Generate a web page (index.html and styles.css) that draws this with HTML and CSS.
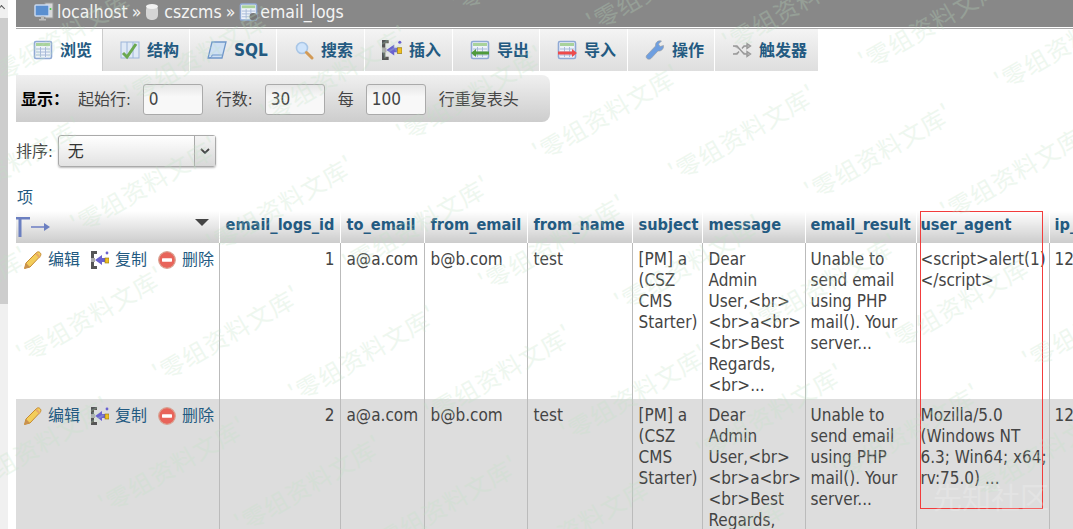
FILE: index.html
```html
<!DOCTYPE html>
<html lang="zh">
<head>
<meta charset="utf-8">
<title>email_logs</title>
<link rel="stylesheet" href="styles.css">
</head>
<body>
<svg class="defs" aria-hidden="true">
  <symbol id="i-table" viewBox="0 0 20 20">
    <rect x="1.500" y="1.500" width="17" height="17" rx="1.500" fill="#eef3fa" stroke="#8fa9d4" stroke-width="1.600"/>
    <rect x="3" y="3" width="14" height="3" fill="#a9d29b"/>
    <path d="M3 9h14M3 12h14M3 15h14M7.500 7v10M12.500 7v10" stroke="#a8bad8" stroke-width="1"/>
  </symbol>
  <symbol id="i-pencil" viewBox="0 0 18 18">
    <path d="M.5 17.500l1.500-5.500L12.500 1.500c1.500-1.200 3-.6 3.800.4.8 1 .8 2.300-.2 3.400L6 16z" fill="#f3cd5a" stroke="#c58a32" stroke-width="1"/>
    <path d="M12 2.500l4 4" stroke="#e6a96a" stroke-width="2"/>
    <path d="M.5 17.500l1.500-5.500 4 4z" fill="#c9914f"/>
  </symbol>
  <symbol id="i-insert" viewBox="0 0 18 18">
    <path d="M0 0h6v3H3v4H0zM0 11h3v4h3v3H0z" fill="#555"/>
    <rect x="0" y="7" width="4" height="4" fill="#aaa"/>
    <path d="M11 4v3h3v4h-3v3L4 9z" fill="#6a62d0"/>
    <rect x="14" y="7" width="4" height="5" fill="#f0c020" stroke="#8a7010" stroke-width=".6"/>
    <circle cx="16" cy="2" r="1.400" fill="#6a62d0"/>
  </symbol>
  <symbol id="i-del" viewBox="0 0 18 18">
    <circle cx="9" cy="9" r="8.300" fill="#e8645a" stroke="#d9a090" stroke-width="1.200"/>
    <rect x="4" y="7.300" width="10" height="3.400" rx=".6" fill="#fff"/>
  </symbol>
</svg>
<div class="page">
  <aside class="gutter">
    <div class="gutter-top"><span class="gutter-arrow"></span></div>
    <div class="gutter-thumb"></div>
  </aside>
  <main class="main">
    <header class="crumbs">
      <svg class="crumb-icon" viewBox="0 0 20 20"><rect x="11" y="1" width="8" height="15" fill="#d8d8d8" stroke="#999"/><rect x="1" y="3" width="14" height="11" rx="1" fill="#5a8fd0" stroke="#c8d8ee" stroke-width="1.500"/><path d="M5 17h7v1.500H5zM7 14h3v3H7z" fill="#bbb"/><circle cx="16.500" cy="7" r="1" fill="#4c4"/></svg>
      <span class="crumb">localhost</span><span class="crumb-sep">»</span>
      <svg class="crumb-icon small" viewBox="0 0 14 20"><rect x="1" y="3" width="12" height="15" rx="5" fill="#d5d5d5"/><ellipse cx="7" cy="4.500" rx="6" ry="2.500" fill="#f2f2f2"/></svg>
      <span class="crumb">cszcms</span><span class="crumb-sep">»</span>
      <svg class="crumb-icon table" viewBox="0 0 20 20"><use href="#i-table"/><circle cx="15" cy="15" r="4" fill="#777"/></svg>
      <span class="crumb">email_logs</span>
    </header>
    <nav class="tabs">
      <a class="tab active w87"><svg class="tab-icon"><use href="#i-table"/></svg><span>浏览</span></a>
      <a class="tab w87"><svg class="tab-icon" viewBox="0 0 20 20"><rect x="1" y="2" width="18" height="16" fill="#dfe9f6" stroke="#9db5da"/><path d="M7 2v16M13 2v16" stroke="#9db5da"/><path d="M3 13l4 4 9-13" fill="none" stroke="#6aa84f" stroke-width="3"/></svg><span>结构</span></a>
      <a class="tab w87"><svg class="tab-icon" viewBox="0 0 20 20"><path d="M5 2h14l-4 16H1z" fill="#cfe0f4" stroke="#6f97c9" stroke-width="1.300"/><path d="M1 18c3 0 4-1 4-3h10" fill="none" stroke="#6f97c9"/></svg><span class="sql">SQL</span></a>
      <a class="tab w88"><svg class="tab-icon" viewBox="0 0 20 20"><circle cx="8" cy="8" r="5.500" fill="#cfe4fb" stroke="#a9c6e6" stroke-width="1.600"/><path d="M12.500 12.500l5.500 5.500" stroke="#d39a55" stroke-width="3" stroke-linecap="round"/></svg><span>搜索</span></a>
      <a class="tab w88"><svg class="tab-icon"><use href="#i-insert"/></svg><span>插入</span></a>
      <a class="tab w87"><svg class="tab-icon" viewBox="0 0 20 20"><use href="#i-table"/><path d="M1 13l5-4v2.500h13v3H6V17z" fill="#4f9a3c"/></svg><span>导出</span></a>
      <a class="tab w88"><svg class="tab-icon" viewBox="0 0 20 20"><use href="#i-table"/><path d="M1 11.500h14V9l5 4-5 4v-2.500H1z" fill="#ee4b4b"/></svg><span>导入</span></a>
      <a class="tab w87"><svg class="tab-icon" viewBox="0 0 20 20"><path d="M1.500 15.500L10.500 6c-.5-3.500 2.500-6 6-5L13.500 4l1.500 2.500 3.500-1c.5 3.500-2.500 6-5.500 5.500L6 18.500c-2.500 2-6-.5-4.500-3z" fill="#6f9fe0" stroke="#9a9a9a" stroke-width=".6"/></svg><span>操作</span></a>
      <a class="tab w104"><svg class="tab-icon" viewBox="0 0 20 20"><path d="M1 6h4l7 8h3M1 14h4l2-2.500M10 8.500L12 6h3M15 3.500L18.500 6 15 8.500zM15 11.500l3.500 2.500-3.500 2.500z" fill="#bbb" stroke="#999" stroke-width="1.400"/></svg><span>触发器</span></a>
    </nav>
    <form class="options">
      <strong class="opt-title">显示：</strong>
      <label class="opt-label">起始行:</label>
      <span class="opt-input">0</span>
      <label class="opt-label">行数:</label>
      <span class="opt-input">30</span>
      <label class="opt-label">每</label>
      <span class="opt-input">100</span>
      <label class="opt-label">行重复表头</label>
    </form>
    <div class="sort">
      <label>排序:</label>
      <div class="select"><span class="select-value">无</span><span class="select-btn"><svg viewBox="0 0 10 6" class="chev"><path d="M1 1l4 4 4-4" fill="none" stroke="#444" stroke-width="1.800"/></svg></span></div>
    </div>
    <div class="item-link">项</div>
    <div class="table-wrap">
      <table class="data">
        <colgroup>
          <col class="c0"><col class="c1"><col class="c2"><col class="c3"><col class="c4"><col class="c5"><col class="c6"><col class="c7"><col class="c8"><col class="c9">
        </colgroup>
        <thead>
          <tr>
            <th class="th-first">
              <div class="th-first-row">
                <svg class="t-arrow" viewBox="0 0 34 20"><path d="M0 0h14v2.500H5.500V20H2.500V2.500H0z" fill="#6b7fc0"/><path d="M15 10h14" stroke="#8a97cc" stroke-width="2"/><path d="M28 6l6 4-6 4z" fill="#6b7fc0"/></svg>
                <span class="th-tri"></span>
              </div>
            </th>
            <th>email_logs_id</th><th>to_email</th><th>from_email</th><th>from_name</th><th>subject</th><th>message</th><th>email_result</th><th>user_agent</th><th>ip_address</th>
          </tr>
        </thead>
        <tbody>
          <tr>
            <td class="actions"><div class="action-row">
              <a class="act"><svg class="act-icon"><use href="#i-pencil"/></svg>编辑</a>
              <a class="act"><svg class="act-icon"><use href="#i-insert"/></svg>复制</a>
              <a class="act"><svg class="act-icon"><use href="#i-del"/></svg>删除</a>
            </div></td>
            <td class="num">1</td><td>a@a.com</td><td>b@b.com</td><td>test</td>
            <td>[PM] a<br>(CSZ<br>CMS<br>Starter)</td>
            <td>Dear<br>Admin<br>User,&lt;br&gt;<br>&lt;br&gt;a&lt;br&gt;<br>&lt;br&gt;Best<br>Regards,<br>&lt;br&gt;...</td>
            <td>Unable to<br>send email<br>using PHP<br>mail(). Your<br>server...</td>
            <td>&lt;script&gt;alert(1)<br>&lt;/script&gt;</td>
            <td>127.0.0.1</td>
          </tr>
          <tr class="alt">
            <td class="actions"><div class="action-row">
              <a class="act"><svg class="act-icon"><use href="#i-pencil"/></svg>编辑</a>
              <a class="act"><svg class="act-icon"><use href="#i-insert"/></svg>复制</a>
              <a class="act"><svg class="act-icon"><use href="#i-del"/></svg>删除</a>
            </div></td>
            <td class="num">2</td><td>a@a.com</td><td>b@b.com</td><td>test</td>
            <td>[PM] a<br>(CSZ<br>CMS<br>Starter)</td>
            <td>Dear<br>Admin<br>User,&lt;br&gt;<br>&lt;br&gt;a&lt;br&gt;<br>&lt;br&gt;Best<br>Regards,<br>&lt;br&gt;...</td>
            <td>Unable to<br>send email<br>using PHP<br>mail(). Your<br>server...</td>
            <td>Mozilla/5.0<br>(Windows NT<br>6.3; Win64; x64;<br>rv:75.0) ...</td>
            <td>127.0.0.1</td>
          </tr>
        </tbody>
      </table>
    </div>
  </main>
</div>
<div class="redbox"></div>
<div class="brand">先知社区</div>
<svg class="watermarks" viewBox="0 0 1073 529" aria-hidden="true">
  <g class="wm">
    <text transform="translate(-112 345) rotate(-30)">'零组资料文库'</text>
    <text transform="translate(24 365) rotate(-30)">'零组资料文库'</text>
    <text transform="translate(160 384) rotate(-30)">'零组资料文库'</text>
    <text transform="translate(296 404) rotate(-30)">'零组资料文库'</text>
    <text transform="translate(432 423) rotate(-30)">'零组资料文库'</text>
    <text transform="translate(568 443) rotate(-30)">'零组资料文库'</text>
    <text transform="translate(704 462) rotate(-30)">'零组资料文库'</text>
    <text transform="translate(840 482) rotate(-30)">'零组资料文库'</text>
    <text transform="translate(976 501) rotate(-30)">'零组资料文库'</text>
    <text transform="translate(-58 215) rotate(-30)">'零组资料文库'</text>
    <text transform="translate(78 235) rotate(-30)">'零组资料文库'</text>
    <text transform="translate(214 254) rotate(-30)">'零组资料文库'</text>
    <text transform="translate(350 274) rotate(-30)">'零组资料文库'</text>
    <text transform="translate(486 293) rotate(-30)">'零组资料文库'</text>
    <text transform="translate(622 313) rotate(-30)">'零组资料文库'</text>
    <text transform="translate(758 332) rotate(-30)">'零组资料文库'</text>
    <text transform="translate(894 352) rotate(-30)">'零组资料文库'</text>
    <text transform="translate(1030 371) rotate(-30)">'零组资料文库'</text>
    <text transform="translate(-4 85) rotate(-30)">'零组资料文库'</text>
    <text transform="translate(132 105) rotate(-30)">'零组资料文库'</text>
    <text transform="translate(268 124) rotate(-30)">'零组资料文库'</text>
    <text transform="translate(404 144) rotate(-30)">'零组资料文库'</text>
    <text transform="translate(540 163) rotate(-30)">'零组资料文库'</text>
    <text transform="translate(676 183) rotate(-30)">'零组资料文库'</text>
    <text transform="translate(812 202) rotate(-30)">'零组资料文库'</text>
    <text transform="translate(948 222) rotate(-30)">'零组资料文库'</text>
    <text transform="translate(50 -45) rotate(-30)">'零组资料文库'</text>
    <text transform="translate(186 -25) rotate(-30)">'零组资料文库'</text>
    <text transform="translate(322 -6) rotate(-30)">'零组资料文库'</text>
    <text transform="translate(458 14) rotate(-30)">'零组资料文库'</text>
    <text transform="translate(594 33) rotate(-30)">'零组资料文库'</text>
    <text transform="translate(730 53) rotate(-30)">'零组资料文库'</text>
    <text transform="translate(866 72) rotate(-30)">'零组资料文库'</text>
    <text transform="translate(1002 92) rotate(-30)">'零组资料文库'</text>
    <text transform="translate(-30 495) rotate(-30)">'零组资料文库'</text>
    <text transform="translate(106 515) rotate(-30)">'零组资料文库'</text>
    <text transform="translate(242 534) rotate(-30)">'零组资料文库'</text>
    <text transform="translate(378 554) rotate(-30)">'零组资料文库'</text>
    <text transform="translate(514 573) rotate(-30)">'零组资料文库'</text>
    <text transform="translate(650 593) rotate(-30)">'零组资料文库'</text>
  </g>
</svg>
</body>
</html>
```
FILE: styles.css
```css
* { box-sizing: border-box; }
html, body { margin: 0; height: 100%; overflow: hidden; background: #fff; }
body {
  position: relative;
  font-family: "DejaVu Sans Condensed", "Noto Sans CJK SC", sans-serif;
  font-stretch: condensed;
  font-size: 16px;
  line-height: 21px;
  color: #444;
}
.defs { position: absolute; width: 0; height: 0; }
.page { display: flex; height: 529px; overflow: hidden; }
.gutter { flex: 0 0 8px; background: #f0f0f0; display: flex; flex-direction: column; }
.gutter-top { height: 18px; background: #f0f0f0; position: relative; }
.gutter-arrow { display: block; width: 5px; height: 5px; margin: 6px 0 0 -1px; border-left: 1px solid #555; border-top: 1px solid #555; transform: rotate(45deg); }
.gutter-thumb { height: 286px; background: #cdcdcd; }
.main { flex: 1; min-width: 0; padding-left: 8px; overflow: hidden; }

.crumbs { height: 27px; background: #888; display: flex; align-items: center; padding: 0 0 3px 18px; font-size: 17.500px; color: #f4f4f4; }
.crumb-icon { width: 20px; height: 20px; flex: none; margin-right: 3px; }
.crumb-icon.small { width: 14px; margin: 0 5px 0 0; }
.crumb-icon.table { width: 19px; margin-right: 2px; }
.crumb-sep { margin: 0 4px 0 4px; }

.tabs { display: flex; height: 43px; margin-top: 1px; border-top: 1px solid #aaa; }
.tab { display: flex; align-items: center; height: 42px; padding-left: 17px; gap: 7px; border-right: 1px solid #fff; background: linear-gradient(#f4f4f4, #dedede); color: #235a81; font-weight: bold; font-size: 16px; }
.tab.active { background: #fff; border-right-color: #ccc; }
.tab-icon { width: 20px; height: 20px; flex: none; }
.w87 { width: 87px; }
.w88 { width: 88px; }
.w104 { width: 104px; }
.sql { font-size: 17px; }

.options { display: flex; align-items: center; width: 534px; height: 47px; margin-top: 4px; padding: 1px 0 0 5px; background: linear-gradient(#f0f0f0, #cdcdcd); border-radius: 0 8px 8px 0; }
.opt-title { color: #000; width: 57px; }
.opt-label { margin: 0 12px 0 0; white-space: nowrap; }
.opt-input { display: block; width: 60px; height: 31px; margin-right: 13px; padding: 4px 5px; background: linear-gradient(#e6e6e6, #f8f8f8 40%); border: 1px solid #aaa; border-radius: 3px; font-size: 17px; }

.sort { display: flex; align-items: center; height: 32px; margin-top: 13px; }
.select { display: flex; width: 158px; height: 32px; margin-left: 5px; border: 1px solid #aaa; border-radius: 3px; background: linear-gradient(#fff, #e2e2e2); box-shadow: 0 1px 2px #bbb; }
.select-value { flex: 1; padding: 5px 9px; color: #333; }
.select-btn { width: 21px; display: flex; align-items: center; justify-content: center; border-left: 1px solid #aaa; background: linear-gradient(#f4f4f4, #d8d8d8); }
.chev { width: 10px; height: 6px; }
.item-link { height: 21px; margin: 20px 0 3px; padding-left: 1px; color: #235a81; }

.table-wrap { overflow: hidden; }
.data { border-collapse: collapse; table-layout: fixed; width: 1133px; }
.c0 { width: 203px; }
.c1 { width: 121px; }
.c2 { width: 84px; }
.c3 { width: 103px; }
.c4 { width: 105px; }
.c5 { width: 70px; }
.c6 { width: 103px; }
.c7 { width: 111px; }
.c8 { width: 133px; }
.c9 { width: 100px; }
.data th { height: 32px; padding: 0 5px 6px; text-align: left; white-space: nowrap; overflow: hidden; color: #235a81; font-size: 16.200px; font-weight: bold; background: linear-gradient(#fff, #ccc); border-left: 1px solid #fff; }
.data td { padding: 6px 5px 3px; vertical-align: top; white-space: nowrap; border-left: 1px solid #bbb; font-size: 17px; }
.data th:nth-child(-n+7), .data td:nth-child(-n+7) { padding-left: 6px; }
.data th:nth-child(9), .data td:nth-child(9) { padding-left: 4px; }
.data th.th-first { padding: 0; border-left: 0; }
.data td.actions { padding: 6px 0 0 8px; border-left: 0; font-size: 16px; }
.data .num { text-align: right; }
.alt td { background: #ddd; }
.th-first-row { display: flex; align-items: flex-start; justify-content: space-between; padding: 5px 10px 0 0; height: 30px; }
.t-arrow { width: 34px; height: 20px; }
.th-tri { width: 0; height: 0; margin-top: 2px; border: 7px solid transparent; border-top: 7px solid #444; border-bottom: 0; }
.action-row { display: flex; gap: 11px; }
.act { display: flex; align-items: center; gap: 6px; color: #235a81; }
.act-icon { width: 18px; height: 18px; flex: none; }

.redbox { position: absolute; left: 920px; top: 211px; width: 123px; height: 298px; border: 1px solid #f23c3c; }
.brand { position: absolute; left: 933px; top: 484px; font-size: 29px; line-height: 30px; color: #fff; opacity: .2; white-space: nowrap; }
.watermarks { position: absolute; left: 0; top: 0; width: 1073px; height: 529px; pointer-events: none; }
.wm text { font-family: "Noto Sans CJK SC", sans-serif; font-size: 24px; letter-spacing: 1px; fill: #bfe3c3; opacity: .26; }
```
